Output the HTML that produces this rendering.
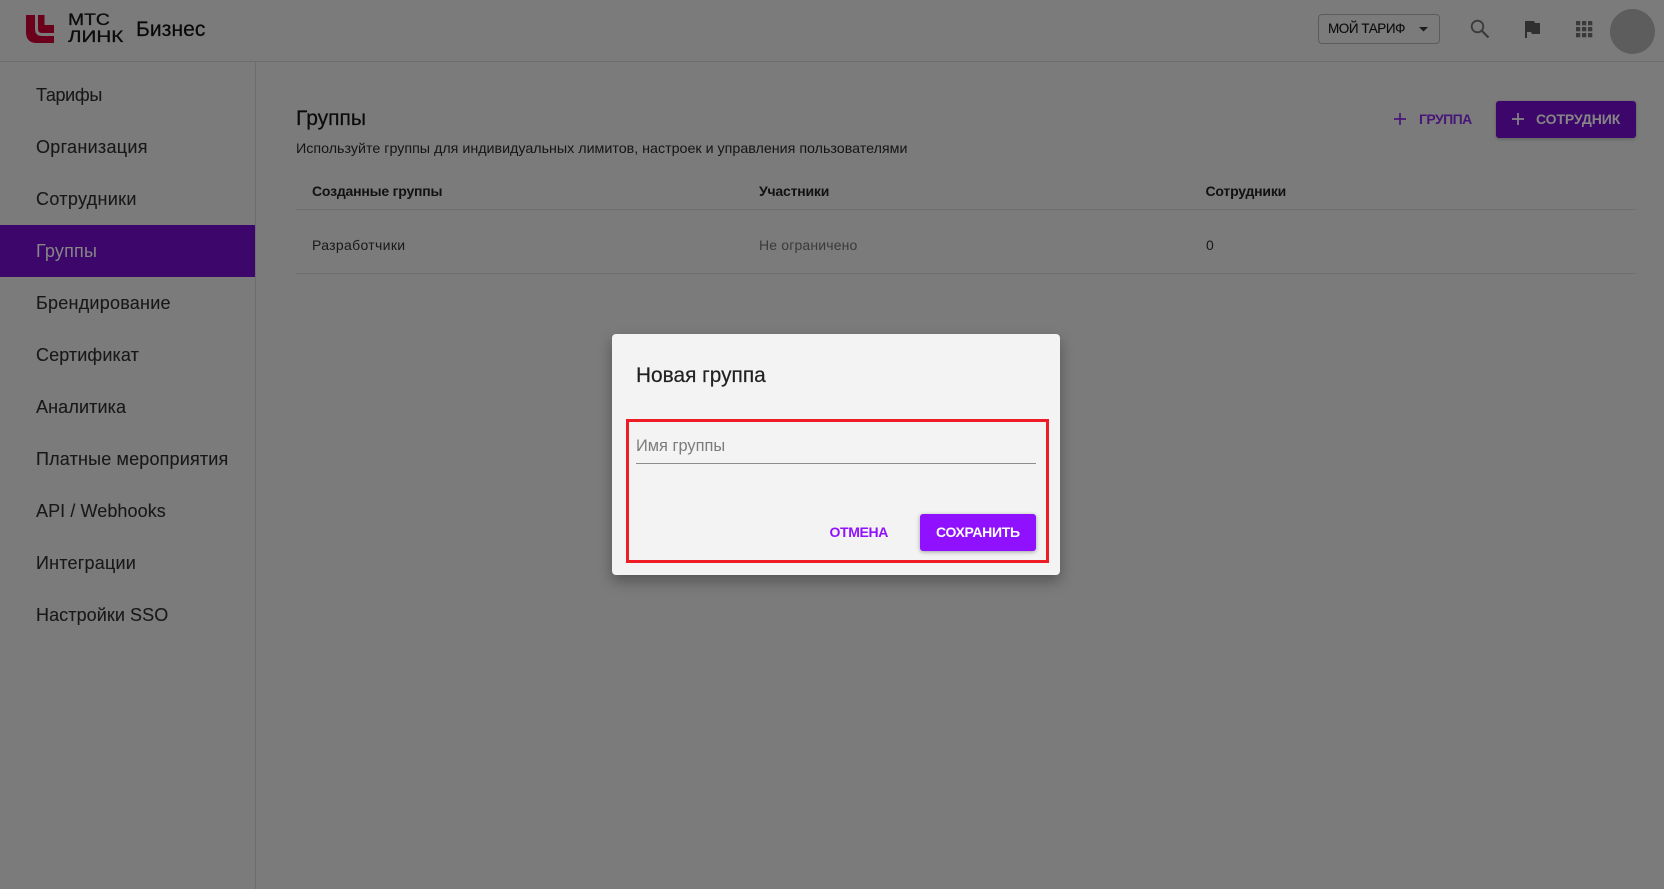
<!DOCTYPE html>
<html lang="ru"><head><meta charset="utf-8"><title>Группы</title>
<style>
html,body{margin:0;padding:0;width:1664px;height:889px;overflow:hidden;background:#7b7b7b}
body{font-family:"Liberation Sans","DejaVu Sans",sans-serif;color:#0e0e0e;position:relative}
.t{position:absolute;white-space:nowrap;line-height:20px}
.b{position:absolute}
.nav{left:36px;font-size:18px;color:#181818;line-height:24px;-webkit-text-stroke:.1px #181818}
</style></head><body>
<div class="b" style="left:0;top:61px;width:1664px;height:1px;background:#6d6d6d"></div>
<div class="b" style="left:255px;top:61px;width:1px;height:828px;background:#6d6d6d"></div>

<svg class="b" style="left:26px;top:15px" width="28" height="28" viewBox="0 0 28 28"><path d="M0 0H9V14Q9 21 16 21H28V28H11Q0 28 0 17Z" fill="#6a001b"/><path d="M12 0H18.5V10H28V18H16Q12 18 12 14Z" fill="#6a001b"/></svg>
<div class="t" style="left:68px;top:11.5px;font-size:16.5px;line-height:17px;color:#0c0c0c;transform:scaleX(1.17);transform-origin:0 50%;-webkit-text-stroke:.3px #0c0c0c">МТС</div>
<div class="t" style="left:68px;top:29px;font-size:16.5px;line-height:17px;color:#0c0c0c;transform:scaleX(1.25);transform-origin:0 50%;-webkit-text-stroke:.3px #0c0c0c">ЛИНК</div>
<div class="t" style="left:136px;top:20px;font-size:21px;letter-spacing:.1px;color:#080808;-webkit-text-stroke:.2px #080808">Бизнес</div>

<div class="b" style="left:1318px;top:14px;width:120px;height:28px;border:1px solid #5c5c5c;border-radius:4px"></div>
<div class="t" style="left:1328px;top:19px;font-size:13.5px;letter-spacing:-.45px;color:#0c0c0c;-webkit-text-stroke:.1px #0c0c0c">МОЙ ТАРИФ</div>
<svg class="b" style="left:1419px;top:27px" width="9" height="5"><path d="M0 0H9L4.5 4.5Z" fill="#1c1c1c"/></svg>
<svg class="b" style="left:1468px;top:17px" width="24" height="24" viewBox="0 0 24 24"><circle cx="9.5" cy="9.5" r="5.8" fill="none" stroke="#3a3a3a" stroke-width="1.8"/><path d="M14 14L20.5 20.5" stroke="#3a3a3a" stroke-width="2.2"/></svg>
<svg class="b" style="left:1525px;top:21px" width="16" height="18" viewBox="0 0 16 18"><path d="M0 0H9L10 2H15V13H7L6 11H2V17H0Z" fill="#303030"/></svg>
<svg class="b" style="left:1576px;top:21px" width="17" height="17" fill="#3a3a3a"><rect x="0" y="0" width="4.3" height="4.3"/><rect x="6" y="0" width="4.3" height="4.3"/><rect x="12" y="0" width="4.3" height="4.3"/><rect x="0" y="6" width="4.3" height="4.3"/><rect x="6" y="6" width="4.3" height="4.3"/><rect x="12" y="6" width="4.3" height="4.3"/><rect x="0" y="12" width="4.3" height="4.3"/><rect x="6" y="12" width="4.3" height="4.3"/><rect x="12" y="12" width="4.3" height="4.3"/></svg>
<div class="b" style="left:1610px;top:9px;width:45px;height:45px;border-radius:50%;background:#5d5d5d"></div>

<div class="b" style="left:0;top:225px;width:255px;height:52px;background:#3c066a"></div>
<div class="t nav" style="top:83px;letter-spacing:-.35px">Тарифы</div>
<div class="t nav" style="top:135px;letter-spacing:.29px">Организация</div>
<div class="t nav" style="top:187px;letter-spacing:.32px">Сотрудники</div>
<div class="t nav" style="top:239px;letter-spacing:.18px;color:#868686;-webkit-text-stroke:0">Группы</div>
<div class="t nav" style="top:291px;letter-spacing:.23px">Брендирование</div>
<div class="t nav" style="top:343px;letter-spacing:.1px">Сертификат</div>
<div class="t nav" style="top:395px;letter-spacing:.12px">Аналитика</div>
<div class="t nav" style="top:447px;letter-spacing:.17px">Платные мероприятия</div>
<div class="t nav" style="top:499px;letter-spacing:.08px">API / Webhooks</div>
<div class="t nav" style="top:551px;letter-spacing:.21px">Интеграции</div>
<div class="t nav" style="top:603px;letter-spacing:.08px">Настройки SSO</div>

<div class="t" style="left:296px;top:109px;font-size:21px;line-height:20px;color:#0a0a0a;-webkit-text-stroke:.2px #0a0a0a">Группы</div>
<div class="t" style="left:296px;top:139px;font-size:14.28px;color:#141414">Используйте группы для индивидуальных лимитов, настроек и управления пользователями</div>

<svg class="b" style="left:1394px;top:113px" width="12" height="12"><path d="M6 0V12M0 6H12" stroke="#471678" stroke-width="1.7"/></svg>
<div class="t" style="left:1419px;top:109px;font-size:14px;color:#471678;font-weight:bold;letter-spacing:-.55px">ГРУППА</div>
<div class="b" style="left:1496px;top:101px;width:140px;height:37px;background:#3c066a;border-radius:3px;box-shadow:0 1px 3px rgba(0,0,0,.25)"></div>
<svg class="b" style="left:1512px;top:113px" width="12" height="12"><path d="M6 0V12M0 6H12" stroke="#868686" stroke-width="1.7"/></svg>
<div class="t" style="left:1536px;top:109px;font-size:14px;color:#868686;font-weight:bold;letter-spacing:-.1px">СОТРУДНИК</div>

<div class="t" style="left:312px;top:181px;font-size:14px;font-weight:bold;letter-spacing:-.2px;color:#111">Созданные группы</div>
<div class="t" style="left:759px;top:181px;font-size:14px;font-weight:bold;letter-spacing:-.2px;color:#111">Участники</div>
<div class="t" style="left:1205.5px;top:181px;font-size:14px;font-weight:bold;letter-spacing:-.2px;color:#111">Сотрудники</div>
<div class="b" style="left:296px;top:209px;width:1340px;height:1px;background:#707070"></div>
<div class="t" style="left:312px;top:235px;font-size:14px;letter-spacing:.33px;color:#181818">Разработчики</div>
<div class="t" style="left:759px;top:235px;font-size:14px;letter-spacing:.16px;color:#3a3a3a">Не ограничено</div>
<div class="t" style="left:1206px;top:235px;font-size:14px;letter-spacing:0;color:#181818">0</div>
<div class="b" style="left:296px;top:273px;width:1340px;height:1px;background:#707070"></div>

<div class="b" style="left:612px;top:334px;width:448px;height:241px;background:#f3f3f3;border-radius:4px;box-shadow:0 6px 14px rgba(0,0,0,.32)"></div>
<div class="t" style="left:636px;top:366px;font-size:20.85px;color:#212121;-webkit-text-stroke:.2px #212121">Новая группа</div>
<div class="b" style="left:626px;top:419px;width:417px;height:138px;border:3px solid #ee1c25"></div>
<div class="t" style="left:636px;top:436px;font-size:16.4px;color:#7c7c7c">Имя группы</div>
<div class="b" style="left:636px;top:463px;width:400px;height:1px;background:#8c8c8c"></div>
<div class="t" style="left:829.5px;top:522px;font-size:14px;color:#8f11ff;font-weight:bold;letter-spacing:-.35px">ОТМЕНА</div>
<div class="b" style="left:920px;top:514px;width:116px;height:37px;background:#8f11ff;border-radius:3px;box-shadow:0 1px 4px rgba(0,0,0,.35)"></div>
<div class="t" style="left:936px;top:522px;font-size:14px;color:#fff;font-weight:bold;letter-spacing:-.3px">СОХРАНИТЬ</div>
</body></html>
